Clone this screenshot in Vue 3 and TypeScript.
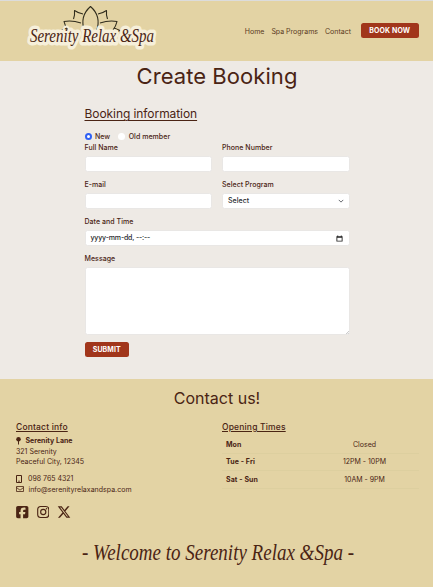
<script setup lang="ts">
import { ref } from 'vue'

const member = ref<'new' | 'old'>('new')
const links: string[] = ['Home', 'Spa Programs', 'Contact']
const hours: { day: string; time: string }[] = [
  { day: 'Mon', time: 'Closed' },
  { day: 'Tue - Fri', time: '12PM - 10PM' },
  { day: 'Sat - Sun', time: '10AM - 9PM' },
]
</script>

<template>
  <div class="page">
    <header class="header">
      <svg class="logo" viewBox="0 0 136 50" role="img" aria-label="Serenity Relax &amp; Spa">
        <g class="lotus">
          <path d="M64.500 1.500C57 8 55 16 58.500 26M64.500 1.500C72 8 74 16 70.500 26" />
          <path d="M57 9Q52 8 48.500 5.500Q49 10 47.500 14M72 9Q77 8 80.500 5.500Q80 10 81.500 14" />
          <path d="M55 18Q46 15 38 16.500Q39 21 42 25M74 18Q83 15 91 16.500Q90 21 87 25" />
          <path d="M41 23L35 25.500L40 28M88 23L94 25.500L89 28" />
        </g>
        <text class="wordmark halo" x="4" y="37" textLength="124" lengthAdjust="spacingAndGlyphs">Serenity Relax &amp;Spa</text>
        <text class="wordmark" x="4" y="37" textLength="124" lengthAdjust="spacingAndGlyphs" aria-hidden="true">Serenity Relax &amp;Spa</text>
      </svg>
      <nav class="nav">
        <a v-for="link in links" :key="link">{{ link }}</a>
      </nav>
      <button class="btn book">BOOK NOW</button>
    </header>

    <main class="main">
      <h1>Create Booking</h1>
      <form class="form" @submit.prevent>
        <h2>Booking information</h2>
        <div class="radios">
          <label><input v-model="member" type="radio" value="new" />New</label>
          <label><input v-model="member" type="radio" value="old" />Old member</label>
        </div>
        <div class="grid">
          <label class="field"><span>Full Name</span><input class="control" type="text" /></label>
          <label class="field"><span>Phone Number</span><input class="control" type="tel" /></label>
          <label class="field"><span>E-mail</span><input class="control" type="email" /></label>
          <label class="field"><span>Select Program</span>
            <span class="control shown select">Select
              <svg class="chevron" viewBox="0 0 16 16"><path d="m2 5 6 6 6-6" /></svg>
            </span>
          </label>
          <label class="field wide"><span>Date and Time</span>
            <span class="control shown date"><span>yyyy-mm-dd, --:--</span>
              <svg class="calendar" viewBox="0 0 16 16"><path d="M3 1h2v2h6V1h2v2h2v12H1V3h2zM3 6v7h10V6z" /></svg>
            </span>
          </label>
          <label class="field wide"><span>Message</span>
            <span class="area-wrap">
              <textarea class="control area"></textarea>
              <svg class="grip" viewBox="0 0 4 4"><path d="M0 4 4 0M2.200 4 4 2.200" /></svg>
            </span>
          </label>
        </div>
        <button class="btn submit">SUBMIT</button>
      </form>
    </main>

    <footer class="footer">
      <h2 class="contact-title">Contact us!</h2>
      <div class="columns">
        <section class="info">
          <h3 class="t-info">Contact info</h3>
          <p class="lane">
            <svg class="pin" viewBox="0 0 10 16"><circle cx="5" cy="4.5" r="4.5" /><path d="M4 8h2v6l-1 2-1-2z" /></svg>
            <b>Serenity Lane</b>
          </p>
          <p class="street">321 Serenity</p>
          <p class="city">Peaceful City, 12345</p>
          <p class="phone">
            <svg viewBox="0 0 12 16" class="mobile"><path fill-rule="evenodd" d="M2 0h8q2 0 2 2v12q0 2-2 2H2q-2 0-2-2V2q0-2 2-2zM2 2v12h8V2zM4 11.5h4V13H4z" /></svg>
            <span>098 765 4321</span>
          </p>
          <p class="mail">
            <svg viewBox="0 0 16 12" class="envelope"><path d="M1 1h14v10H1zM1 3l5.500 4.300q1.500 1 3 0L15 3" /></svg>
            <span>info@serenityrelaxandspa.com</span>
          </p>
          <div class="social">
            <svg viewBox="0 0 448 512"><path d="M64 32C28.700 32 0 60.700 0 96v320c0 35.300 28.700 64 64 64h98.200V334.200h-52.800V256h52.800v-33.700c0-87.100 39.400-127.500 125-127.500 16.200 0 44.200 3.200 55.700 6.400V172c-6-.6-16.500-1-29.600-1-42 0-58.200 15.900-58.200 57.200V256h83.600l-14.400 78.200h-69.200V480H384c35.300 0 64-28.700 64-64V96c0-35.300-28.700-64-64-64z" /></svg>
            <svg viewBox="0 0 448 512"><g fill="none" stroke="currentColor" stroke-width="41"><rect x="21" y="53" width="406" height="406" rx="108" /><circle cx="224" cy="256" r="95" /></g><circle cx="343" cy="137" r="27" /></svg>
            <svg class="x" viewBox="0 0 512 512"><path d="M389.200 48h70.600L305.600 224.200 487 464H345L233.700 318.600 106.500 464H35.800l164.900-188.500L26.800 48h145.600l100.500 132.900zM364.400 421.800h39.100L151.100 88h-42z" /></svg>
          </div>
        </section>
        <section class="opening">
          <h3 class="t-open">Opening Times</h3>
          <div class="hours">
            <div v-for="row in hours" :key="row.day" class="hour">
              <b>{{ row.day }}</b><span>{{ row.time }}</span>
            </div>
          </div>
        </section>
      </div>
      <svg class="welcome" viewBox="0 0 276 42">
        <text x="2" y="23" textLength="272" lengthAdjust="spacingAndGlyphs">- Welcome to Serenity Relax &amp;Spa -</text>
      </svg>
    </footer>
  </div>
</template>

<style>
body { margin: 0; background: #e3d3a4; }
</style>

<style scoped>
* { box-sizing: border-box; }
.page { width: 433px; height: 587px; overflow: hidden; display: flex; flex-direction: column; color: #4a2414; font: 7px/11px Inter, 'Liberation Sans', sans-serif; }
h1, h2, h3, p { margin: 0; font-weight: 400; }
.header { height: 61px; flex: none; background: #e3d3a4; border-top: 1px solid #dcdcdc; display: flex; align-items: flex-start; padding: 4px 14.500px 0 26px; }
.logo { width: 136px; height: 50px; overflow: visible; flex: none; }
.lotus { fill: none; stroke: #302c1c; stroke-width: 1.1; stroke-linejoin: round; }
.wordmark { font: italic 18.500px 'Z003', 'Liberation Serif', serif; fill: #4a2414; }
.halo { stroke: #f6efda; stroke-width: 7px; stroke-linejoin: round; fill: #f6efda; }
.nav { display: flex; gap: 7px; margin: 21px 10px 0 auto; color: #5a3a22; white-space: nowrap; }
.btn { border: 0; border-radius: 2.500px; background: #a1361b; color: #fff; font: 700 7px/15px Inter, sans-serif; padding: 0; height: 15.500px; }
.book { width: 57.500px; margin-top: 17.500px; letter-spacing: .12px; }
.main { height: 317.500px; flex: none; background: #eeeae5; }
h1 { font-size: 22px; line-height: 30px; text-align: center; letter-spacing: .06px; padding-left: 1px; }
.form { width: 265px; margin: 16px 0 0 84.500px; }
.form h2 { font-size: 12px; line-height: 14px; letter-spacing: -.07px; text-decoration: underline; text-decoration-thickness: 1px; text-underline-offset: 1.500px; }
.radios { display: flex; gap: 8px; height: 10px; margin-top: 10px; font-weight: 500; letter-spacing: .04px; }
.radios label { display: flex; align-items: center; gap: 3.500px; }
.radios input { appearance: none; width: 7px; height: 7px; margin: 0; border-radius: 50%; background: #fff; }
.radios input:checked { border: 2.200px solid #2f61f5; }
.grid { display: grid; grid-template-columns: 127px 127.500px; column-gap: 10.500px; row-gap: 7px; margin-top: 1px; letter-spacing: .04px; }
.field { display: flex; flex-direction: column; font-weight: 500; line-height: 11px; }
.wide { grid-column: 1 / -1; }
.control { display: block; width: 100%; height: 16.500px; margin-top: 2.500px; border: 1px solid #e9e7e5; border-radius: 2.500px; background: #fff; padding: 0 5px; line-height: 16px; outline: 0; font-family: inherit; font-size: 7px; }
.shown { display: flex; align-items: center; justify-content: space-between; color: #272a2d; }
.select { padding-top: 1px; }
.date { letter-spacing: -.16px; padding-top: 1px; }
.area-wrap { position: relative; display: block; }
.area { height: 68px; resize: none; }
.grip { position: absolute; right: 1px; bottom: 1px; width: 3px; height: 3px; stroke: #777; stroke-width: .5; }
.chevron { width: 6px; height: 6px; fill: none; stroke: #343a40; stroke-width: 2; }
.calendar { width: 7px; height: 7px; fill: #222; margin-right: .5px; }
.submit { width: 44.500px; margin-top: 7px; display: block; letter-spacing: .08px; }
.footer { flex: 1; background: #e3d3a4; }
.contact-title { font-size: 16px; line-height: 20px; text-align: center; padding: 9px 0 1px 1px; }
.columns { display: grid; grid-template-columns: 206px 197px; padding: 12.500px 0 0 16px; height: 128px; }
h3 { font-size: 8.500px; line-height: 12px; font-weight: 500; text-decoration: underline; text-underline-offset: 1.200px; letter-spacing: .17px; }
.info svg { fill: currentColor; flex: none; }
.info p { display: flex; align-items: center; height: 10.500px; white-space: nowrap; }
.info .lane { margin-top: 2px; height: 11px; }
.pin { width: 5px; height: 8px; margin-right: 4.500px; }
.info .phone { margin-top: 6.500px; }
.mobile { width: 6px; height: 8px; margin-right: 6px; }
.info .envelope { width: 8px; height: 6px; margin-right: 4.500px; fill: none; stroke: currentColor; stroke-width: 1.600; }
.mail { letter-spacing: .02px; }
.social { display: flex; gap: 8px; margin-top: 10px; }
.social svg { width: 12.500px; height: 14px; }
.social .x { width: 14px; }
.hours { padding-top: 3px; }
.hour { display: flex; align-items: center; height: 17.500px; border-bottom: 1px solid #ddcf9f; padding-left: 4px; }
.hour b { width: 84px; flex: none; letter-spacing: .1px; }
.hour span { flex: 1; text-align: center; }
.welcome { display: block; width: 276px; height: 42px; overflow: visible; margin: 0 0 0 80px; }
.welcome text { font: italic 22.500px 'Z003', 'Liberation Serif', serif; fill: #4a2414; }
</style>
